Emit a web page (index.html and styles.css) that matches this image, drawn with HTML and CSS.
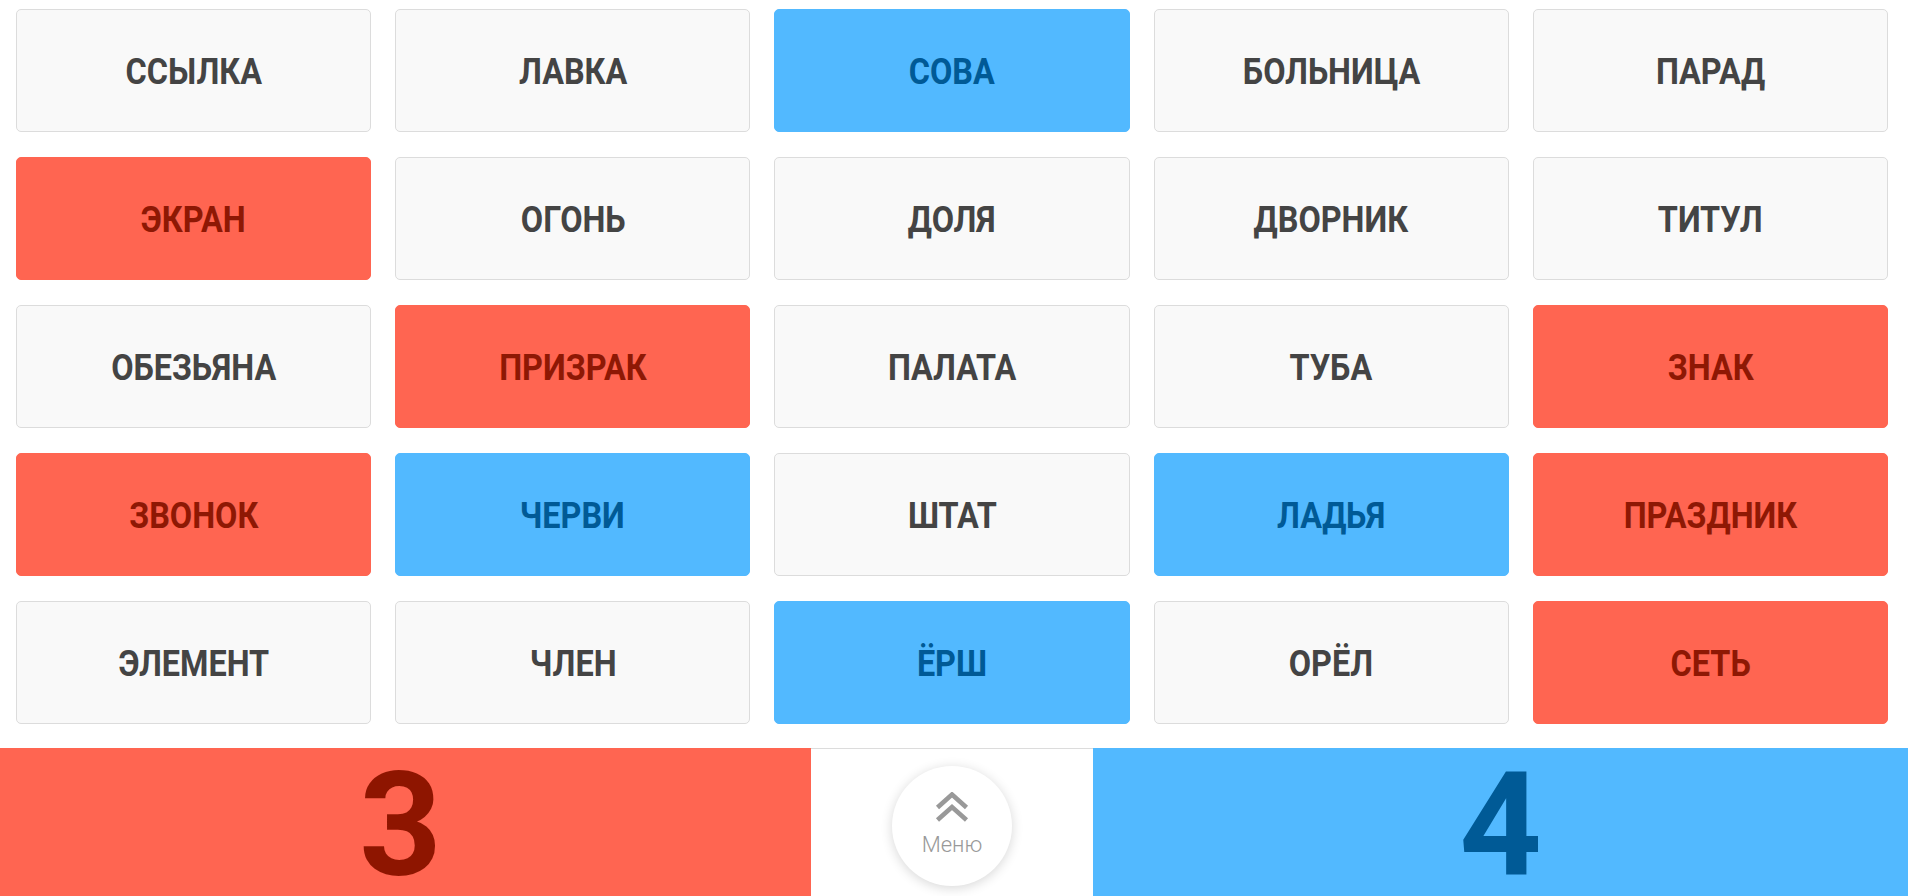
FILE: index.html
```html
<!DOCTYPE html>
<html lang="ru">
<head>
<meta charset="utf-8">
<title>Слова</title>
<link rel="stylesheet" href="styles.css">
</head>
<body>
<main class="board">
  <div class="card"><span>ССЫЛКА</span></div>
  <div class="card"><span>ЛАВКА</span></div>
  <div class="card blue"><span>СОВА</span></div>
  <div class="card"><span>БОЛЬНИЦА</span></div>
  <div class="card"><span>ПАРАД</span></div>

  <div class="card red"><span>ЭКРАН</span></div>
  <div class="card"><span>ОГОНЬ</span></div>
  <div class="card"><span>ДОЛЯ</span></div>
  <div class="card"><span>ДВОРНИК</span></div>
  <div class="card"><span>ТИТУЛ</span></div>

  <div class="card"><span>ОБЕЗЬЯНА</span></div>
  <div class="card red"><span>ПРИЗРАК</span></div>
  <div class="card"><span>ПАЛАТА</span></div>
  <div class="card"><span>ТУБА</span></div>
  <div class="card red"><span>ЗНАК</span></div>

  <div class="card red"><span>ЗВОНОК</span></div>
  <div class="card blue"><span>ЧЕРВИ</span></div>
  <div class="card"><span>ШТАТ</span></div>
  <div class="card blue"><span>ЛАДЬЯ</span></div>
  <div class="card red"><span>ПРАЗДНИК</span></div>

  <div class="card"><span>ЭЛЕМЕНТ</span></div>
  <div class="card"><span>ЧЛЕН</span></div>
  <div class="card blue"><span>ЁРШ</span></div>
  <div class="card"><span>ОРЁЛ</span></div>
  <div class="card red"><span>СЕТЬ</span></div>
</main>
<footer class="scorebar">
  <div class="score score-red">3</div>
  <div class="menu-cell">
    <button class="menu-btn" type="button">
      <svg class="chev" width="34" height="30" viewBox="0 0 34 30" aria-hidden="true">
        <path d="M2.5 15.5 L17 2.5 L31.5 15.5" fill="none" stroke="#999999" stroke-width="4.6"/>
        <path d="M2.5 28 L17 15 L31.5 28" fill="none" stroke="#999999" stroke-width="4.6"/>
      </svg>
      <span class="menu-label">Меню</span>
    </button>
  </div>
  <div class="score score-blue">4</div>
</footer>
</body>
</html>
```
FILE: styles.css
```css
html, body {
  margin: 0;
  padding: 0;
  background: #ffffff;
  font-family: Roboto, "Liberation Sans", sans-serif;
}

body {
  width: 1908px;
  height: 896px;
  overflow: hidden;
}

.board {
  display: grid;
  grid-template-columns: repeat(5, 1fr);
  grid-auto-rows: 123px;
  column-gap: 24px;
  row-gap: 25px;
  padding: 9px 20px 24px 16px;
}

.card {
  display: flex;
  align-items: center;
  justify-content: center;
  box-sizing: border-box;
  padding-top: 2px;
  background: #f9f9f9;
  border: 1px solid #dcdcdc;
  border-radius: 5px;
  color: #444444;
  font-weight: 700;
  font-size: 36px;
}

.card span {
  display: inline-block;
  transform: scaleX(0.9);
  white-space: nowrap;
}

.card.red {
  background: #ff6551;
  border-color: #ff6551;
  color: #8e1804;
}

.card.blue {
  background: #52b9ff;
  border-color: #52b9ff;
  color: #005a96;
}

.scorebar {
  display: grid;
  grid-template-columns: 811px 282px 1fr;
  height: 148px;
}

.score {
  display: flex;
  align-items: center;
  justify-content: center;
  box-sizing: border-box;
  padding-top: 8px;
  font-weight: 700;
  font-size: 144px;
  line-height: 130px;
}

.score-red {
  background: #ff6551;
  color: #8e1500;
  padding-right: 10px;
}

.score-blue {
  background: #52b9ff;
  color: #005a96;
}

.menu-cell {
  border-top: 1px solid #dcdcdc;
  box-sizing: border-box;
  display: flex;
  justify-content: center;
  padding-top: 17px;
}

.menu-btn {
  width: 120px;
  height: 120px;
  border-radius: 50%;
  border: none;
  background: #ffffff;
  box-shadow: 0 2px 12px rgba(0, 0, 0, 0.16);
  display: flex;
  flex-direction: column;
  align-items: center;
  padding: 26px 0 0;
  font-family: Roboto, "Liberation Sans", sans-serif;
}

.chev {
  display: block;
}

.menu-label {
  margin-top: 12px;
  font-size: 22px;
  font-weight: 300;
  color: #999999;
  line-height: 1;
}
```
